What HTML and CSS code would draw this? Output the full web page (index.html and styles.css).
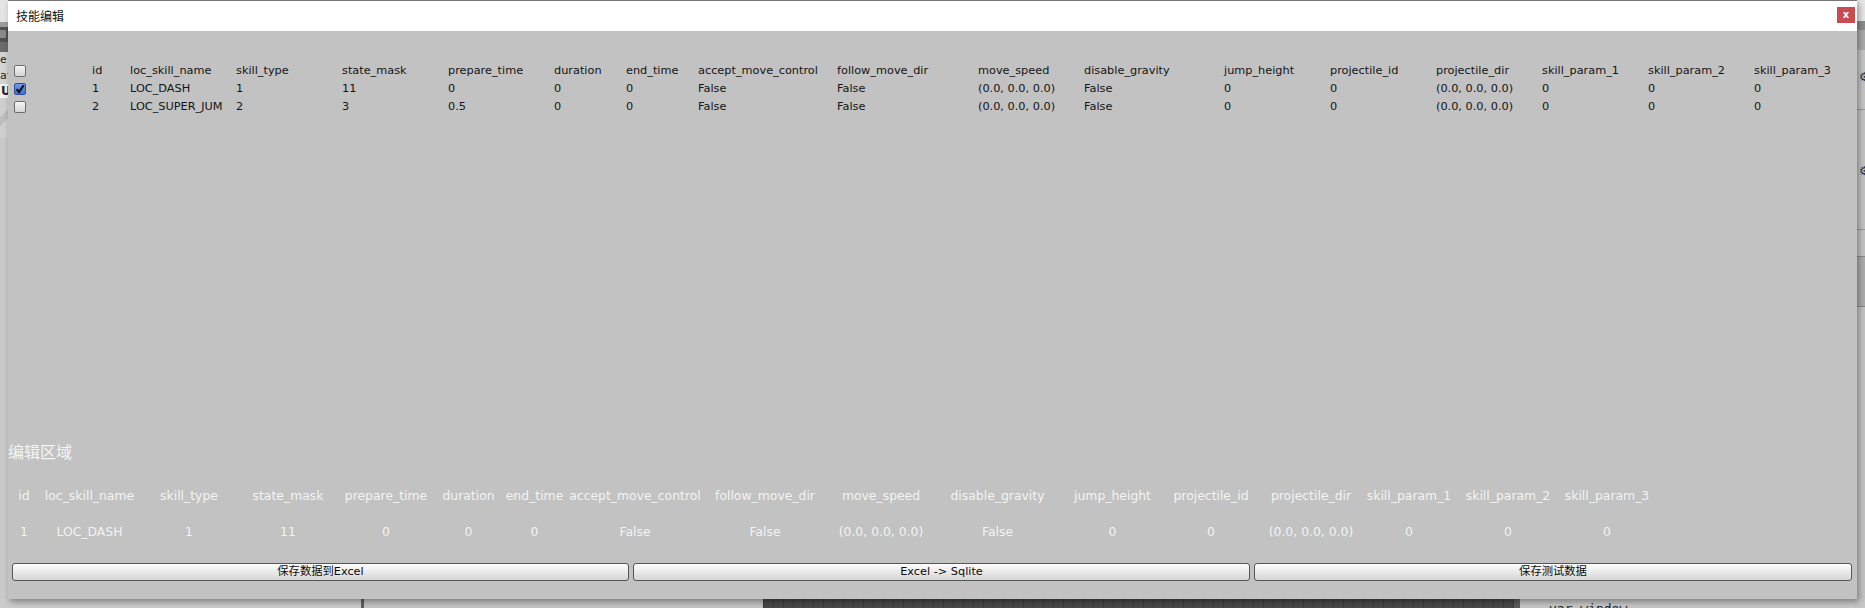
FILE: index.html
```html
<!DOCTYPE html>
<html lang="zh">
<head>
<meta charset="utf-8">
<title>技能编辑</title>
<link rel="stylesheet" href="styles.css">
</head>
<body>
<div class="editor">
  <div class="ed-mid">
    <div class="ed-left">
      <div class="lb lb1"></div>
      <div class="lb lb2"></div>
      <div class="lb lb3"><span class="sq"></span></div>
      <div class="lb lb4"></div>
      <div class="lb lb5">e</div>
      <div class="lb lb6">at</div>
      <div class="lb lb7">U</div>
      <div class="lb lb8"></div>
      <div class="lb lb9"></div>
    </div>
    <div class="ed-center"></div>
    <div class="ed-right">
      <div class="rb rb1"></div>
      <div class="rb rb2"></div>
      <div class="rb rb3"></div>
      <div class="rb rb4"><span class="gear">⚙</span></div>
      <div class="rb rb5"><span class="gear">⚙</span></div>
      <div class="rb rb6"></div>
      <div class="rb rb7"></div>
      <div class="rb rb8"></div>
    </div>
  </div>
  <div class="ed-bottom">
    <div class="bs bs1"></div>
    <div class="bs bs2"></div>
    <div class="bs bs3"></div>
    <div class="bs bs4"></div>
    <div class="bs bs5"></div>
    <div class="bs bs6"><span class="code">var window =</span></div>
  </div>
</div>

<div class="window">
  <div class="titlebar">
    <span class="title">技能编辑</span>
    <button class="close">x</button>
  </div>
  <div class="wbody">
    <div class="table">
      <span class="cb"></span><span>id</span><span>loc_skill_name</span><span>skill_type</span><span>state_mask</span><span>prepare_time</span><span>duration</span><span>end_time</span><span>accept_move_control</span><span>follow_move_dir</span><span>move_speed</span><span>disable_gravity</span><span>jump_height</span><span>projectile_id</span><span>projectile_dir</span><span>skill_param_1</span><span>skill_param_2</span><span>skill_param_3</span>

      <span class="cb checked"><svg viewBox="0 0 12 12" width="12" height="12"><path d="M2.6 6.2 L5 9 L9.6 2.4" fill="none" stroke="#0a0a0a" stroke-width="2"/></svg></span><span>1</span><span>LOC_DASH</span><span>1</span><span>11</span><span>0</span><span>0</span><span>0</span><span>False</span><span>False</span><span>(0.0, 0.0, 0.0)</span><span>False</span><span>0</span><span>0</span><span>(0.0, 0.0, 0.0)</span><span>0</span><span>0</span><span>0</span>

      <span class="cb"></span><span>2</span><span class="clip">LOC_SUPER_JUMP</span><span>2</span><span>3</span><span>0.5</span><span>0</span><span>0</span><span>False</span><span>False</span><span>(0.0, 0.0, 0.0)</span><span>False</span><span>0</span><span>0</span><span>(0.0, 0.0, 0.0)</span><span>0</span><span>0</span><span>0</span>
    </div>

    <div class="edit">
      <div class="edit-title">编辑区域</div>
      <div class="egrid">
        <span>id</span><span>loc_skill_name</span><span>skill_type</span><span>state_mask</span><span>prepare_time</span><span>duration</span><span>end_time</span><span>accept_move_control</span><span>follow_move_dir</span><span>move_speed</span><span>disable_gravity</span><span>jump_height</span><span>projectile_id</span><span>projectile_dir</span><span>skill_param_1</span><span>skill_param_2</span><span>skill_param_3</span>
        <span>1</span><span>LOC_DASH</span><span>1</span><span>11</span><span>0</span><span>0</span><span>0</span><span>False</span><span>False</span><span>(0.0, 0.0, 0.0)</span><span>False</span><span>0</span><span>0</span><span>(0.0, 0.0, 0.0)</span><span>0</span><span>0</span><span>0</span>
      </div>
      <div class="buttons">
        <button class="btn b1">保存数据到Excel</button>
        <button class="btn b2">Excel -&gt; Sqlite</button>
        <button class="btn b3">保存测试数据</button>
      </div>
    </div>
  </div>
</div>
</body>
</html>
```

FILE: styles.css
```css
* { box-sizing: border-box; }
html, body { margin: 0; padding: 0; }
body {
  width: 1865px;
  height: 608px;
  overflow: hidden;
  position: relative;
  background: #c2c2c2;
  font-family: "DejaVu Sans", "Noto Sans CJK SC", sans-serif;
}

/* ---------- editor behind the window ---------- */
.editor {
  display: flex;
  flex-direction: column;
  width: 1865px;
  height: 608px;
}
.ed-mid {
  display: flex;
  height: 599px;
}
.ed-left {
  width: 8px;
  display: flex;
  flex-direction: column;
  overflow: hidden;
  font-family: "DejaVu Sans Mono", monospace;
  font-size: 11px;
  color: #222;
}
.lb { flex: none; overflow: hidden; white-space: nowrap; line-height: 16px; }
.lb1 { height: 22px; background: #e4e4e4; }
.lb2 { height: 5px; background: #9c9c9c; }
.lb3 { height: 15px; background: #505050; padding: 3px 0 0 0; }
.lb3 .sq { display: block; width: 6px; height: 8px; background: #8a8a8a; }
.lb4 { height: 10px; background: #6a6a6a; }
.lb5 { height: 16px; background: #d4d4d4; }
.lb6 { height: 16px; background: #d4d4d4; }
.lb7 { height: 14px; background: #f2f2f2; font-weight: bold; font-family: "DejaVu Sans", sans-serif; font-size: 12px; line-height: 14px; padding-left: 1px; }
.lb8 { height: 40px; background: linear-gradient(135deg, #cfcfcf 0 40%, #bdbdbd 40% 60%, #cfcfcf 60%); }
.lb9 { flex: 1; background: #c9c9c9; }

.ed-center { flex: 1; background: #c2c2c2; }

.ed-right {
  width: 8px;
  display: flex;
  flex-direction: column;
  overflow: hidden;
}
.rb { flex: none; overflow: hidden; }
.rb1 { height: 21px; background: #e6e6e6; }
.rb2 { height: 9px; background: #8c8c8c; }
.rb3 { height: 20px; background: #a9a9a9; }
.rb4 { height: 60px; background: #c4c4c4; border-bottom: 1px solid #9a9a9a; padding-top: 21px; }
.rb5 { height: 120px; background: #c2c2c2; border-bottom: 1px solid #9a9a9a; padding-top: 55px; }
.rb6 { height: 27px; background: #c2c2c2; border-bottom: 1px solid #8a8a8a; }
.rb7 { height: 50px; background: #acacac; border-bottom: 1px solid #888; }
.rb8 { flex: 1; background: #c2c2c2; }
.gear {
  display: block;
  font-family: "DejaVu Sans", sans-serif;
  font-size: 12px;
  line-height: 12px;
  color: #333;
  margin-left: 2px;
}

.ed-bottom {
  display: flex;
  height: 9px;
}
.bs { flex: none; height: 9px; }
.bs1 { width: 361px; background: #cbcbcb; }
.bs2 { width: 3px; background: #5e5e5e; }
.bs3 { width: 399px; background: #c3c3c3; }
.bs4 {
  width: 751px;
  background-color: #484848;
  background-image: repeating-linear-gradient(90deg, #3c3c3c 0 1px, transparent 1px 10px);
}
.bs5 { width: 6px; background: #5c5c5c; }
.bs6 {
  flex: 1;
  background: #c6c6c6;
  overflow: hidden;
  padding-left: 29px;
}
.code {
  display: block;
  font-family: "DejaVu Sans Mono", monospace;
  font-size: 13px;
  line-height: 13px;
  margin-top: 3px;
  color: #222;
  white-space: nowrap;
}

/* ---------- floating window ---------- */
.window {
  position: absolute;
  left: 8px;
  top: 0;
  width: 1849px;
  height: 599px;
  display: flex;
  flex-direction: column;
  background: #c2c2c2;
  border-top: 1px solid #767676;
  box-shadow: 2px 3px 6px rgba(0, 0, 0, 0.35);
}
.titlebar {
  flex: none;
  height: 30px;
  background: #ffffff;
  display: flex;
  align-items: flex-start;
}
.title {
  margin-left: 8px;
  line-height: 30px;
  font-family: "Noto Sans CJK SC", sans-serif;
  font-size: 12px;
  color: #111;
}
.close {
  margin-left: auto;
  margin-right: 2px;
  margin-top: 6px;
  width: 18px;
  height: 16px;
  padding: 0;
  border: none;
  background: #c84b4d;
  color: #fff;
  font-family: "DejaVu Sans", sans-serif;
  font-size: 10px;
  font-weight: bold;
  line-height: 16px;
  text-align: center;
}

.wbody {
  flex: 1;
  display: flex;
  flex-direction: column;
  padding-top: 31px;
}

.table {
  display: grid;
  grid-template-columns: 79px 38px 106px 106px 106px 106px 72px 72px 139px 141px 106px 140px 106px 106px 106px 106px 106px auto;
  grid-auto-rows: 18px;
  align-items: center;
  padding-left: 5px;
  font-size: 11.3px;
  color: #141414;
  white-space: nowrap;
}
.table span { line-height: 18px; }
.table .clip { overflow: hidden; width: 93px; }
.cb {
  display: block;
  width: 12px;
  height: 12px;
  margin-left: 1px;
  border: 1px solid #6c6c6c;
  border-radius: 2px;
  background: linear-gradient(#f6f6f6, #d4d4d4);
}
.table .cb { line-height: 0; }
.cb.checked {
  background: linear-gradient(#6f9ae8, #3f6fd0);
  border-color: #2f4f9a;
}
.cb svg { display: block; margin: -1px 0 0 -1px; }

.edit {
  margin-top: auto;
  display: flex;
  flex-direction: column;
  padding-bottom: 18px;
}
.edit-title {
  font-family: "Noto Sans CJK SC", sans-serif;
  font-size: 16px;
  line-height: 20px;
  color: #f4f4f4;
}
.egrid {
  margin-top: 26px;
  display: grid;
  grid-template-columns: 32px 99px 100px 98px 98px 67px 65px 136px 124px 108px 125px 105px 92px 108px 88px 110px 88px;
  grid-auto-rows: 18px;
  row-gap: 18px;
  justify-items: center;
  align-items: center;
  font-size: 12.4px;
  color: #f3f3f3;
  white-space: nowrap;
}
.egrid span { line-height: 18px; }

.buttons {
  margin-top: 22px;
  display: flex;
  gap: 4px;
  padding: 0 5px 0 4px;
}
.btn {
  flex: none;
  height: 18px;
  padding: 0;
  border: 1px solid #565656;
  border-radius: 3px;
  background: linear-gradient(#fdfdfd, #ececec 45%, #d6d6d6);
  font-family: "DejaVu Sans", "Noto Sans CJK SC", sans-serif;
  font-size: 11.3px;
  line-height: 16px;
  color: #0c0c0c;
  text-align: center;
}
.b1, .b2 { width: 617px; }
.b3 { flex: 1; }
```
